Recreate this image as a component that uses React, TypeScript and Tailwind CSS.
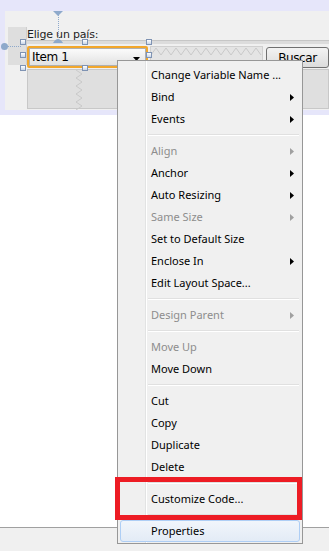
import React from "react";

type Item =
  | { kind: "item"; label: string; disabled?: boolean; sub?: boolean; hot?: boolean }
  | { kind: "sep" };

const menu: Item[] = [
  { kind: "item", label: "Change Variable Name ..." },
  { kind: "item", label: "Bind", sub: true },
  { kind: "item", label: "Events", sub: true },
  { kind: "sep" },
  { kind: "item", label: "Align", sub: true, disabled: true },
  { kind: "item", label: "Anchor", sub: true },
  { kind: "item", label: "Auto Resizing", sub: true },
  { kind: "item", label: "Same Size", sub: true, disabled: true },
  { kind: "item", label: "Set to Default Size" },
  { kind: "item", label: "Enclose In", sub: true },
  { kind: "item", label: "Edit Layout Space..." },
  { kind: "sep" },
  { kind: "item", label: "Design Parent", sub: true, disabled: true },
  { kind: "sep" },
  { kind: "item", label: "Move Up", disabled: true },
  { kind: "item", label: "Move Down" },
  { kind: "sep" },
  { kind: "item", label: "Cut" },
  { kind: "item", label: "Copy" },
  { kind: "item", label: "Duplicate" },
  { kind: "item", label: "Delete" },
  { kind: "sep" },
  { kind: "item", label: "Customize Code..." },
  { kind: "sep" },
  { kind: "item", label: "Properties", hot: true },
];

const handles = [
  [18, 31],
  [80, 31],
  [144, 31],
  [18, 44],
  [144, 44],
  [18, 57],
  [80, 57],
];

function Handle({ x, y }: { x: number; y: number }) {
  return (
    <div
      className="absolute w-[6px] h-[6px] border border-[#7f93b3] bg-gradient-to-b from-white to-[#c9d6e8]"
      style={{ left: x - 3, top: y - 3 }}
    />
  );
}

function Arrow({ disabled }: { disabled?: boolean }) {
  return (
    <svg width="4" height="7" viewBox="0 0 4 7" className="mr-[6px]">
      <path d="M0 0 L4 3.5 L0 7 Z" fill={disabled ? "#a0a0a0" : "#000"} />
    </svg>
  );
}

function Zigzag({ w, h, vertical }: { w: number; h: number; vertical?: boolean }) {
  const pts: string[] = [];
  if (vertical) {
    for (let y = 0, i = 0; y <= h; y += 4, i++) pts.push(`${i % 2 ? 7 : 1},${y}`);
  } else {
    for (let x = 0, i = 0; x <= w; x += 5, i++) pts.push(`${x},${i % 2 ? 1 : 8}`);
  }
  return (
    <svg width={w} height={h} className="block">
      <polyline points={pts.join(" ")} fill="none" stroke="#c9c9c9" strokeWidth="1" />
    </svg>
  );
}

export default function App() {
  return (
    <div className="relative w-[329px] h-[551px] overflow-hidden bg-white flex flex-col font-['Noto_Sans',sans-serif] text-black">
      {/* designer surface */}
      <div className="h-[115px] bg-[#e6e6fa] pt-[11px] pl-[5px] pb-[5px]">
        <div className="relative h-[99px] bg-[#f0f0f0] flex pl-[3px]">
          <div className="w-[19px] h-[38px] mt-[16px] bg-[#dedede] border-r border-[#cfcfcf]" />
          <div className="flex-1 flex flex-col">
            <div className="h-[29px] pt-[17px] text-[11px] leading-[13px] font-['DejaVu_Sans',sans-serif] tracking-[-0.2px] text-[#1e1e1e]">
              Elige un país:
            </div>
            <div className="h-[4px] bg-[#dcdcdc] border-t border-[#c6c6c6]" />
            <div className="mt-[2px] h-[22px] flex items-start">
              <div className="w-[121px] h-[22px] border-2 border-[#f2a72c] rounded-[2px]">
                <div className="h-full flex items-center justify-between pl-[2px] pr-[5px] bg-gradient-to-b from-[#fbfbfb] to-[#e2e2e2] border border-[#b0b0b0]">
                  <span className="text-[12px] leading-none font-['DejaVu_Sans',sans-serif] tracking-[-0.4px]">Item 1</span>
                  <svg width="7" height="4" viewBox="0 0 7 4" className="mt-[4px]">
                    <path d="M0 0 H7 L3.5 4 Z" fill="#000" />
                  </svg>
                </div>
              </div>
              <div className="ml-[2px] w-[113px] h-[20px] bg-[#e4e4e4] border border-[#d0d0d0] overflow-hidden">
                <Zigzag w={113} h={10} />
              </div>
              <div className="ml-[3px] flex-1 h-[21px] mt-[1px] rounded-[3px] border border-[#707070] bg-gradient-to-b from-[#f3f3f3] to-[#dcdcdc] flex items-center justify-center text-[12px] font-['DejaVu_Sans',sans-serif] tracking-[-0.4px]">
                Buscar
              </div>
            </div>
            <div className="mt-[1px] h-[40px] bg-[#dfdfdf] border border-[#c8c8c8] flex">
              <div className="ml-[47px]">
                <Zigzag w={8} h={40} vertical />
              </div>
            </div>
          </div>

          {/* guide lines */}
          <div className="absolute left-[53px] top-0 w-0 h-[29px] border-l border-dotted border-[#8ea9cb]" />
          <svg width="10" height="5" className="absolute left-[48px] top-0">
            <path d="M0 0 H10 L5 5 Z" fill="#8ea9cb" />
          </svg>
          <svg width="10" height="5" className="absolute left-[48px] top-[27px]">
            <path d="M0 5 Q5 -3 10 5 Z" fill="#8ea9cb" />
          </svg>
          <div className="absolute left-0 top-[35px] w-[16px] h-0 border-t border-dotted border-[#8ea9cb]" />
          <div className="absolute left-[-4px] top-[32px] w-[7px] h-[7px] rounded-full bg-[#8ea9cb]" />

          {handles.map(([x, y], i) => (
            <Handle key={i} x={x} y={y} />
          ))}
        </div>
      </div>

      <div className="flex-1" />
      <div className="h-[24px] border-t border-[#a0a0a0] bg-[#f0f0f0]" />

      {/* context menu */}
      <div className="absolute left-[117px] top-[60px] w-[186px] h-[484px] bg-[#f0f0f0] border border-[#979797] pt-[3px] px-[2px] flex flex-col text-[11px] font-['Noto_Sans',sans-serif]">
        <div className="absolute left-[27px] top-0 bottom-0 w-[2px] border-l border-[#e2e3e3] border-r border-r-white" />
        {menu.map((it, i) =>
          it.kind === "sep" ? (
            <div key={i} className="h-[10px] flex items-center pl-[28px] pr-[1px]">
              <div className="w-full h-[2px] border-t border-[#e0e0e0] border-b border-b-white" />
            </div>
          ) : (
            <div
              key={i}
              className={
                it.hot
                  ? "relative h-[22px] flex items-center justify-between pl-[30px] rounded-[3px] border border-[#aecef5] bg-gradient-to-b from-[#f1f5fb] to-[#e3ebf6]"
                  : "relative h-[22px] flex items-center justify-between pl-[31px]"
              }
            >
              <span className={it.disabled ? "text-[#8d8d8d]" : "text-black"}>{it.label}</span>
              {it.sub && <Arrow disabled={it.disabled} />}
            </div>
          )
        )}
      </div>

      {/* highlight frame */}
      <div className="absolute left-[115px] top-[477px] w-[187px] h-[43px] border-[5px] border-[#ed1c24]" />
    </div>
  );
}
